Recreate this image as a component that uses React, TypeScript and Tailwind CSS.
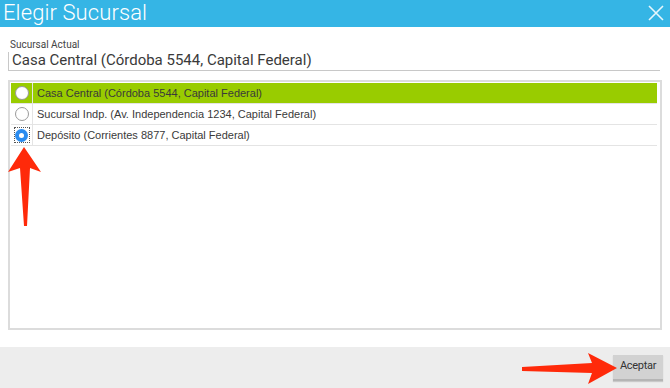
import React from "react";

const rows = [
  "Casa Central (Córdoba 5544, Capital Federal)",
  "Sucursal Indp. (Av. Independencia 1234, Capital Federal)",
  "Depósito (Corrientes 8877, Capital Federal)",
];

export default function App() {
  return (
    <div className="relative w-[670px] h-[388px] bg-white flex flex-col overflow-hidden" style={{ fontFamily: "Roboto, 'Liberation Sans', sans-serif" }}>
      {/* header */}
      <div className="h-[27px] bg-[#35b5e5] flex items-center justify-between pl-[3px] pr-[5px] shrink-0">
        <span className="text-[22px] font-light text-white leading-none tracking-[0.1px] mt-[-2px]">Elegir Sucursal</span>
        <svg width="18" height="18" viewBox="0 0 18 18" className="mt-[-1px]">
          <path d="M2 2 L16 16 M16 2 L2 16" stroke="#e6f6fc" strokeWidth="1.6" fill="none" />
        </svg>
      </div>
      {/* body */}
      <div className="flex-1 flex flex-col px-[8px] pt-[13px]">
        <div className="text-[10px] text-[#444] leading-none pl-[2px] h-[12px]">Sucursal Actual</div>
        <div className="h-[19px] border-l border-b border-[#c8c8c8] pl-[3px] text-[15px] leading-[17px] text-[#3a3a3a] mr-[2px]">
          Casa Central (Córdoba 5544, Capital Federal)
        </div>
        <div className="mt-[9px] h-[250px] border-2 border-[#dcdcdc] bg-white flex flex-col pl-[1px] pr-[3px] pt-[1px]">
          {rows.map((r, i) => (
            <div key={i} className={`h-[21px] flex items-center border-b border-[#e4e4e4] ${i === 0 ? "bg-[#99cc00]" : ""}`}>
              <div className="w-[22px] h-full flex items-center justify-center border-r border-[#e4e4e4]">
                {i === 2 ? (
                  <div className="w-[16px] h-[16px] border border-dotted border-[#555] flex items-center justify-center">
                    <div className="w-[13px] h-[13px] rounded-full bg-[#2a8cf0] flex items-center justify-center">
                      <div className="w-[5px] h-[5px] rounded-full bg-white" />
                    </div>
                  </div>
                ) : (
                  <div className="w-[14px] h-[14px] rounded-full bg-white border border-[#9a9a9a]" />
                )}
              </div>
              <span className="pl-[4px] text-[11px] text-[#3a3a3a]" style={{ fontFamily: "'Liberation Sans', Arial, sans-serif" }}>{r}</span>
            </div>
          ))}
        </div>
      </div>
      {/* footer */}
      <div className="h-[41px] mt-[15px] bg-[#ededed] flex items-center justify-end pr-[7px] shrink-0">
        <button className="h-[26px] w-[50px] bg-[#d2d2d2] border-b-2 border-[#b5b5b5] text-[11px] text-[#333] shadow-[0_1px_1px_rgba(0,0,0,0.15)] tracking-[-0.3px]">
          Aceptar
        </button>
      </div>
      {/* arrows overlay */}
      <svg className="absolute inset-0 pointer-events-none" width="670" height="388">
        <path d="M24 147 L41 172 L30 168 L27 226 L24 226 L20 168 L8 172 Z" fill="#ff2a0a" />
        <path d="M617 368 L588 384 L592 373 L522 371 L522 367 L592 363 L588 353 Z" fill="#ff2a0a" />
      </svg>
    </div>
  );
}
